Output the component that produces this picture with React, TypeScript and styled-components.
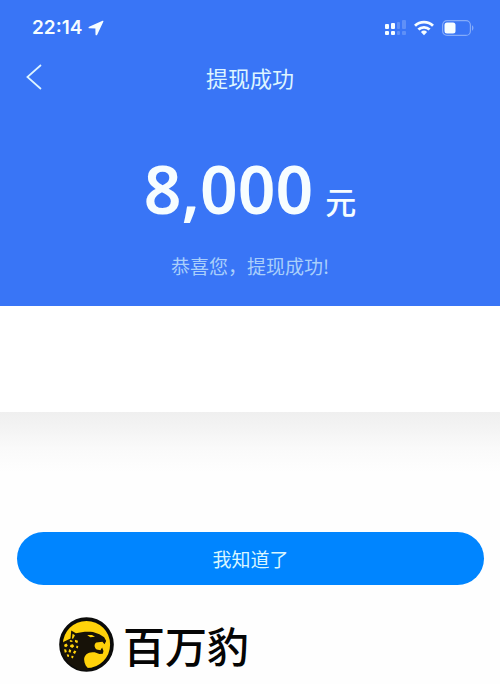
import React from "react";
import styled, { createGlobalStyle } from "styled-components";

const GlobalStyle = createGlobalStyle`
  * { box-sizing: border-box; }
  body {
    margin: 0;
    background: #fefefe;
    font-family: "Noto Sans CJK SC", sans-serif;
  }
`;

const Page = styled.main`
  display: flex;
  flex-direction: column;
  min-height: 100vh;
`;

const Hero = styled.header`
  display: flex;
  flex-direction: column;
  padding-bottom: 26px;
  background: #3975f6;
  color: #f6fdff;
`;

const StatusBar = styled.div`
  display: flex;
  align-items: center;
  justify-content: space-between;
  height: 55px;
  padding: 0 26px 0 32px;
`;

const StatusGroup = styled.div<{ $gap: number }>`
  display: flex;
  align-items: center;
  gap: ${({ $gap }) => $gap}px;
`;

const Time = styled.time`
  font: 600 19px/24px Inter, sans-serif;
`;

const NavBar = styled.nav`
  display: grid;
  grid-template-columns: 48px 1fr 48px;
  align-items: center;
  height: 44px;
`;

const BackButton = styled.button`
  display: flex;
  align-items: center;
  justify-content: flex-end;
  height: 44px;
  padding: 0 6px;
  border: 0;
  background: none;
  color: #def5ff;
  cursor: pointer;
`;

const Title = styled.h1`
  margin: 0;
  color: #def5ff;
  font-size: 22px;
  font-weight: 400;
  line-height: 32px;
  text-align: center;
`;

const Amount = styled.p`
  display: flex;
  align-items: baseline;
  justify-content: center;
  gap: 12px;
  margin: 43px 0 0;
  font: 600 66px/92px "Noto Sans", sans-serif;
`;

const Unit = styled.span`
  font: 500 31px/40px "Noto Sans CJK SC", sans-serif;
`;

const Message = styled.p`
  margin: 18px 0 0;
  color: #a9cffb;
  font-size: 19px;
  line-height: 28px;
  text-align: center;
`;

const Details = styled.section`
  height: 106px;
  background: #fff;
`;

const Actions = styled.section`
  padding: 120px 16px 32px 17px;
  background: linear-gradient(#efefef 0, #f4f4f4 18px, #fafafa 36px, #fefefe 60px);
`;

const ConfirmButton = styled.button`
  display: block;
  width: 100%;
  height: 53px;
  border: 0;
  border-radius: 27px;
  background: #0085ff;
  color: #d8f6ff;
  font: 400 19px/28px "Noto Sans CJK SC", sans-serif;
  cursor: pointer;
`;

const Brand = styled.footer`
  display: flex;
  align-items: center;
  gap: 9px;
  padding: 0 59px;
`;

const BrandName = styled.span`
  color: #050505;
  font: 500 42px/54px "Noto Sans CJK SC", sans-serif;
`;

const LocationIcon = () => (
  <svg width="16" height="16" viewBox="0 0 16 16" aria-hidden="true">
    <path d="M14.6.7 1.1 6.7c-.9.4-.7 1.6.3 1.6l6 .1.1 6c0 1 1.3 1.2 1.7.3l6.1-13c.3-.7-.1-1.2-.7-1Z" fill="currentColor" />
  </svg>
);

const SignalIcon = () => (
  <svg width="21" height="16" viewBox="0 0 21 16" fill="currentColor" aria-hidden="true">
    <rect x="0" y="4" width="4" height="5" rx="1" />
    <rect x="6" y="3" width="4" height="6" rx="1" />
    <rect x="0" y="11" width="4" height="4" rx="1" />
    <rect x="6" y="11" width="4" height="4" rx="1" />
    <g opacity=".2">
      <rect x="12" y="2" width="3" height="7" rx="1" />
      <rect x="17" y="0" width="4" height="9" rx="1" />
      <rect x="12" y="11" width="3" height="4" rx="1" />
      <rect x="17" y="11" width="4" height="4" rx="1" />
    </g>
  </svg>
);

const WifiIcon = () => (
  <svg width="20" height="16" viewBox="0 0 20 16" fill="none" stroke="currentColor" strokeWidth="2.8" aria-hidden="true">
    <path d="M1 5.7a13 13 0 0 1 18 0" />
    <path d="M4.4 9.6a8 8 0 0 1 11.2 0" />
    <path d="M10 15.2 6.9 12a4.5 4.5 0 0 1 6.2 0Z" fill="currentColor" stroke="none" />
  </svg>
);

const BatteryIcon = () => (
  <svg width="32" height="16" viewBox="0 0 32 16" aria-hidden="true">
    <rect x=".6" y=".6" width="27.8" height="14.8" rx="4.5" fill="none" stroke="currentColor" strokeOpacity=".4" strokeWidth="1.2" />
    <rect x="2.5" y="2.5" width="11" height="11" rx="2.5" fill="currentColor" />
    <path d="M30 5.3c1.9.8 1.9 4.6 0 5.4Z" fill="currentColor" opacity=".4" />
  </svg>
);

const BackIcon = () => (
  <svg width="16" height="26" viewBox="0 0 16 26" fill="none" stroke="currentColor" strokeWidth="1.7" aria-hidden="true">
    <path d="M15 1 1.4 13 15 25" />
  </svg>
);

const PantherLogo = () => (
  <svg width="55" height="55" viewBox="29 30 162 162" aria-hidden="true">
    <circle cx="110" cy="111" r="75" fill="#ffd20a" stroke="#0b0b0a" strokeWidth="11" />
    <path
      d="M65 70 79 78C93 74 111 72 129 74L148 81 162 90 168 101 163 110 157 103 139 105C132 109 132 120 140 126L151 128 156 120 160 130 158 138 148 139 134 134C116 131 103 141 103 155 103 168 110 178 120 186L88 186 56 165 40 140 34 112 43 103 63 93Z"
      fill="#171208"
    />
    <g fill="#ffd20a">
      <path d="m112 83 14 0 9 5-14 2Z" />
      <path d="m69 79 7 5-5 9-4 1Z" />
      <path d="m61 98 7 1 1 5-8-1Zm15-1 9 3-2 7-7-3Zm-31 14 6-3 4 6-5 5-6-3Zm18 1 7-2 4 6-6 5-7-4Zm18 2 5 2-2 7-5-3Zm-37 11 6 1 2 7-6 2Zm15-1 6 4-2 7-6-2Zm15 5 6 2-4 8-6-4Zm-22 11 7 1-1 7-5-2Zm14 4 6 1-2 7-5-3Z" />
    </g>
  </svg>
);

export default function App() {
  return (
    <>
      <GlobalStyle />
      <Page>
        <Hero>
          <StatusBar>
            <StatusGroup $gap={6}>
              <Time>22:14</Time>
              <LocationIcon />
            </StatusGroup>
            <StatusGroup $gap={8}>
              <SignalIcon />
              <WifiIcon />
              <BatteryIcon />
            </StatusGroup>
          </StatusBar>
          <NavBar>
            <BackButton type="button" aria-label="返回">
              <BackIcon />
            </BackButton>
            <Title>提现成功</Title>
          </NavBar>
          <Amount>
            8,000<Unit>元</Unit>
          </Amount>
          <Message>恭喜您，提现成功!</Message>
        </Hero>
        <Details />
        <Actions>
          <ConfirmButton type="button">我知道了</ConfirmButton>
        </Actions>
        <Brand>
          <PantherLogo />
          <BrandName>百万豹</BrandName>
        </Brand>
      </Page>
    </>
  );
}
